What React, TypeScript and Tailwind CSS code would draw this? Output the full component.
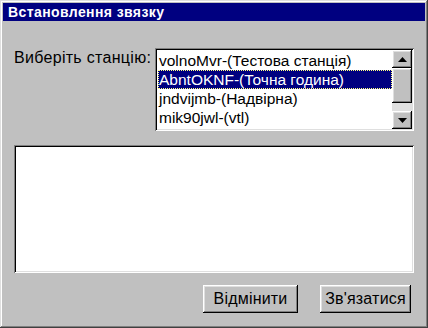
import React from 'react';

const stations = [
  'volnoMvr-(Тестова станція)',
  'AbntOKNF-(Точна година)',
  'jndvijmb-(Надвірна)',
  'mik90jwl-(vtl)',
];

const sunken =
  'shadow-[inset_1px_1px_#808080,inset_-1px_-1px_#ffffff,inset_2px_2px_#000000,inset_-2px_-2px_#dfdfdf]';
const raised =
  'shadow-[inset_-1px_-1px_#000000,inset_1px_1px_#ffffff,inset_-2px_-2px_#808080,inset_2px_2px_#dfdfdf]';

const Arrow: React.FC<{ up?: boolean }> = ({ up }) => (
  <svg width="9" height="5" viewBox="0 0 9 5">
    <path d={up ? 'M4.5 0 L9 5 L0 5 Z' : 'M0 0 L9 0 L4.5 5 Z'} fill="#000" />
  </svg>
);

const Button: React.FC<{ label: string; className?: string }> = ({ label, className }) => (
  <button className={`h-[28px] bg-[#c0c0c0] text-[16px] tracking-[0.2px] text-black ${raised} ${className}`}>
    {label}
  </button>
);

export default function App() {
  const selected = 1;
  return (
    <div
      className="w-[428px] h-[328px] bg-[#c0c0c0] p-[3px] flex flex-col shadow-[inset_-1px_-1px_#404040,inset_1px_1px_#dfdfdf,inset_-2px_-2px_#808080,inset_2px_2px_#ffffff]"
      style={{ fontFamily: '"Liberation Sans", Arial, sans-serif' }}
    >
      <div className="h-[18px] bg-[#000080] flex items-center pl-[5px]">
        <span className="text-white font-bold text-[14px] tracking-[0.4px]">Встановлення звязку</span>
      </div>

      <div className="flex-1 flex flex-col pl-[11px] pr-[11px]">
        <div className="flex mt-[27px]">
          <label className="w-[141px] text-[16px] tracking-[0.3px] text-black leading-[18px] pt-[1px]">
            Виберіть станцію:
          </label>
          <div className={`w-[259px] h-[83px] bg-white p-[2px] flex ${sunken}`}>
            <ul className="flex-1 text-[15.5px] leading-[19px] text-black pl-[1px] pt-[1px] overflow-hidden">
              {stations.map((s, i) => (
                <li
                  key={s}
                  className={
                    i === selected
                      ? 'bg-[#000080] text-white pl-[1px] outline-1 outline-dotted outline-[#ffff80] -outline-offset-1'
                      : 'pl-[1px]'
                  }
                >
                  {s}
                </li>
              ))}
            </ul>
            <div className="w-[20px] flex flex-col bg-[#dfdfdf]">
              <div className={`h-[18px] bg-[#c0c0c0] flex items-center justify-center ${raised}`}>
                <Arrow up />
              </div>
              <div className={`h-[35px] bg-[#c0c0c0] ${raised}`} />
              <div className="flex-1" />
              <div className={`h-[18px] bg-[#c0c0c0] flex items-center justify-center ${raised}`}>
                <Arrow />
              </div>
            </div>
          </div>
        </div>

        <div className={`mt-[14px] h-[128px] bg-white ${sunken}`} />

        <div className="flex justify-end gap-[22px] mt-[12px] pr-[3px]">
          <Button label="Відмінити" className="w-[95px]" />
          <Button label="Зв'язатися" className="w-[91px]" />
        </div>
      </div>
    </div>
  );
}
